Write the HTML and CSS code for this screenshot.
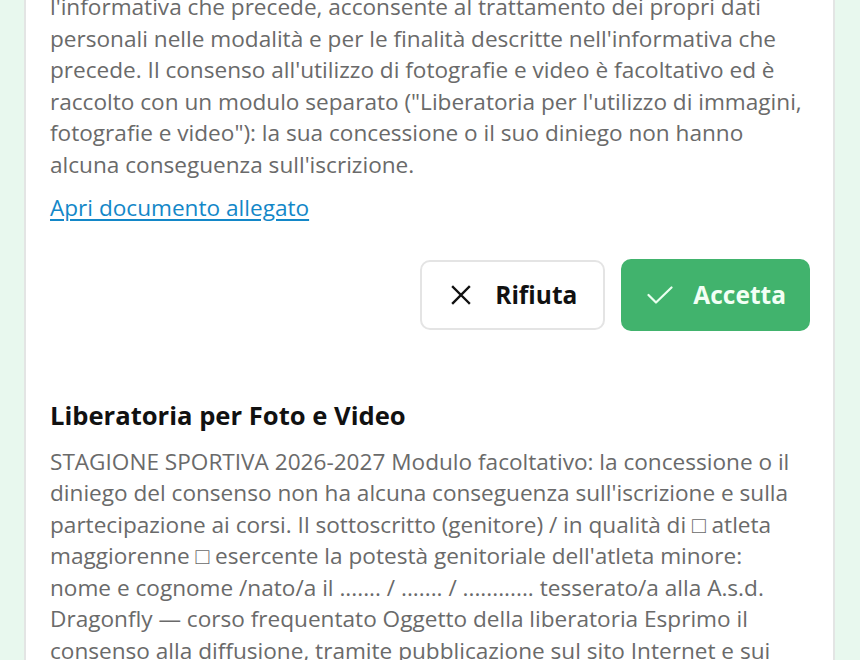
FILE: index.html
```html
<!DOCTYPE html>
<html lang="it"><head><meta charset="utf-8"><link rel="stylesheet" href="styles.css"></head>
<body>
<main class="card">
  <section class="consent">
    <p class="text first">l'informativa che precede, acconsente al trattamento dei propri dati personali nelle modalità e per le finalità descritte nell'informativa che precede. Il consenso all'utilizzo di fotografie e video è facoltativo ed è raccolto con un modulo separato ("Liberatoria per l'utilizzo di immagini, fotografie e video"): la sua concessione o il suo diniego non hanno alcuna conseguenza sull'iscrizione.</p>
    <a class="doc-link" href="#">Apri documento allegato</a>
    <div class="actions">
      <button class="btn btn-reject" type="button">
        <svg class="ico" viewBox="0 0 20 20" width="20" height="20" aria-hidden="true"><path d="M2 2 L18 18 M18 2 L2 18" stroke="#111" stroke-width="2.4" fill="none" stroke-linecap="square"/></svg>
        <span>Rifiuta</span>
      </button>
      <button class="btn btn-accept" type="button">
        <svg class="ico" viewBox="0 0 26 18" width="26" height="18" aria-hidden="true"><path d="M1.5 9 L9 16.5 L24.5 1.5" stroke="#eafff0" stroke-width="2.2" fill="none" stroke-linecap="round" stroke-linejoin="round"/></svg>
        <span>Accetta</span>
      </button>
    </div>
  </section>
  <section class="release">
    <h2 class="title">Liberatoria per Foto e Video</h2>
    <p class="text">STAGIONE SPORTIVA 2026-2027 Modulo facoltativo: la concessione o il diniego del consenso non ha alcuna conseguenza sull'iscrizione e sulla partecipazione ai corsi. Il sottoscritto (genitore) / in qualità di □ atleta maggiorenne □ esercente la potestà genitoriale dell'atleta minore: nome e cognome /nato/a il ....... / ....... / ............ tesserato/a alla A.s.d. Dragonfly — corso frequentato Oggetto della liberatoria Esprimo il consenso alla diffusione, tramite pubblicazione sul sito Internet e sui canali social dell'associazione, di fotografie e video che ritraggono l'atleta durante le attività sportive.</p>
  </section>
</main>
</body></html>
```
FILE: styles.css
```css
html,body{margin:0;padding:0;}
body{
  background:#e8f8ee;
  font-family:"Open Sans","Noto Sans",sans-serif;
  height:660px;
  overflow:hidden;
}
.card{
  margin:0 0 0 24px;
  width:760px;
  padding:0 23px 40px 24px;
  background:#fff;
  border-left:2px solid #e3e5e4;
  border-right:2px solid #e3e5e4;
  min-height:700px;
}
.text{
  margin:0;
  max-width:755px;
  font-size:22.6px;
  line-height:31.5px;
  color:#6a6a6a;
}
.first{margin-top:-9px;}
.doc-link{
  display:inline-block;
  margin-top:12px;
  font-size:22.6px;
  line-height:31.5px;
  color:#1387c8;
  text-decoration:underline;
  text-underline-offset:3px;
  text-decoration-thickness:1.5px;
}
.actions{
  display:flex;
  justify-content:flex-end;
  gap:16px;
  margin-top:35px;
}
.btn{
  display:flex;
  align-items:center;
  height:72px;
  box-sizing:border-box;
  border-radius:10px;
  font-family:"Open Sans","Noto Sans",sans-serif;
  font-weight:700;
  font-size:24.5px;
  cursor:pointer;
}
.btn-reject{
  background:#fff;
  border:2px solid #e4e4e4;
  color:#111;
  padding:0 26px 0 29px;
  gap:24px;
  margin-top:1px;
  height:70px;
}
.btn-accept{
  background:#41b36d;
  border:0;
  color:#f2fff5;
  padding:0 24px 0 26px;
  gap:20px;
}
.ico{display:block;flex:none;}
.release{margin-top:67px;}
.title{
  margin:0 0 12px 0;
  font-size:25.6px;
  line-height:36px;
  font-weight:700;
  color:#111;
}
```
